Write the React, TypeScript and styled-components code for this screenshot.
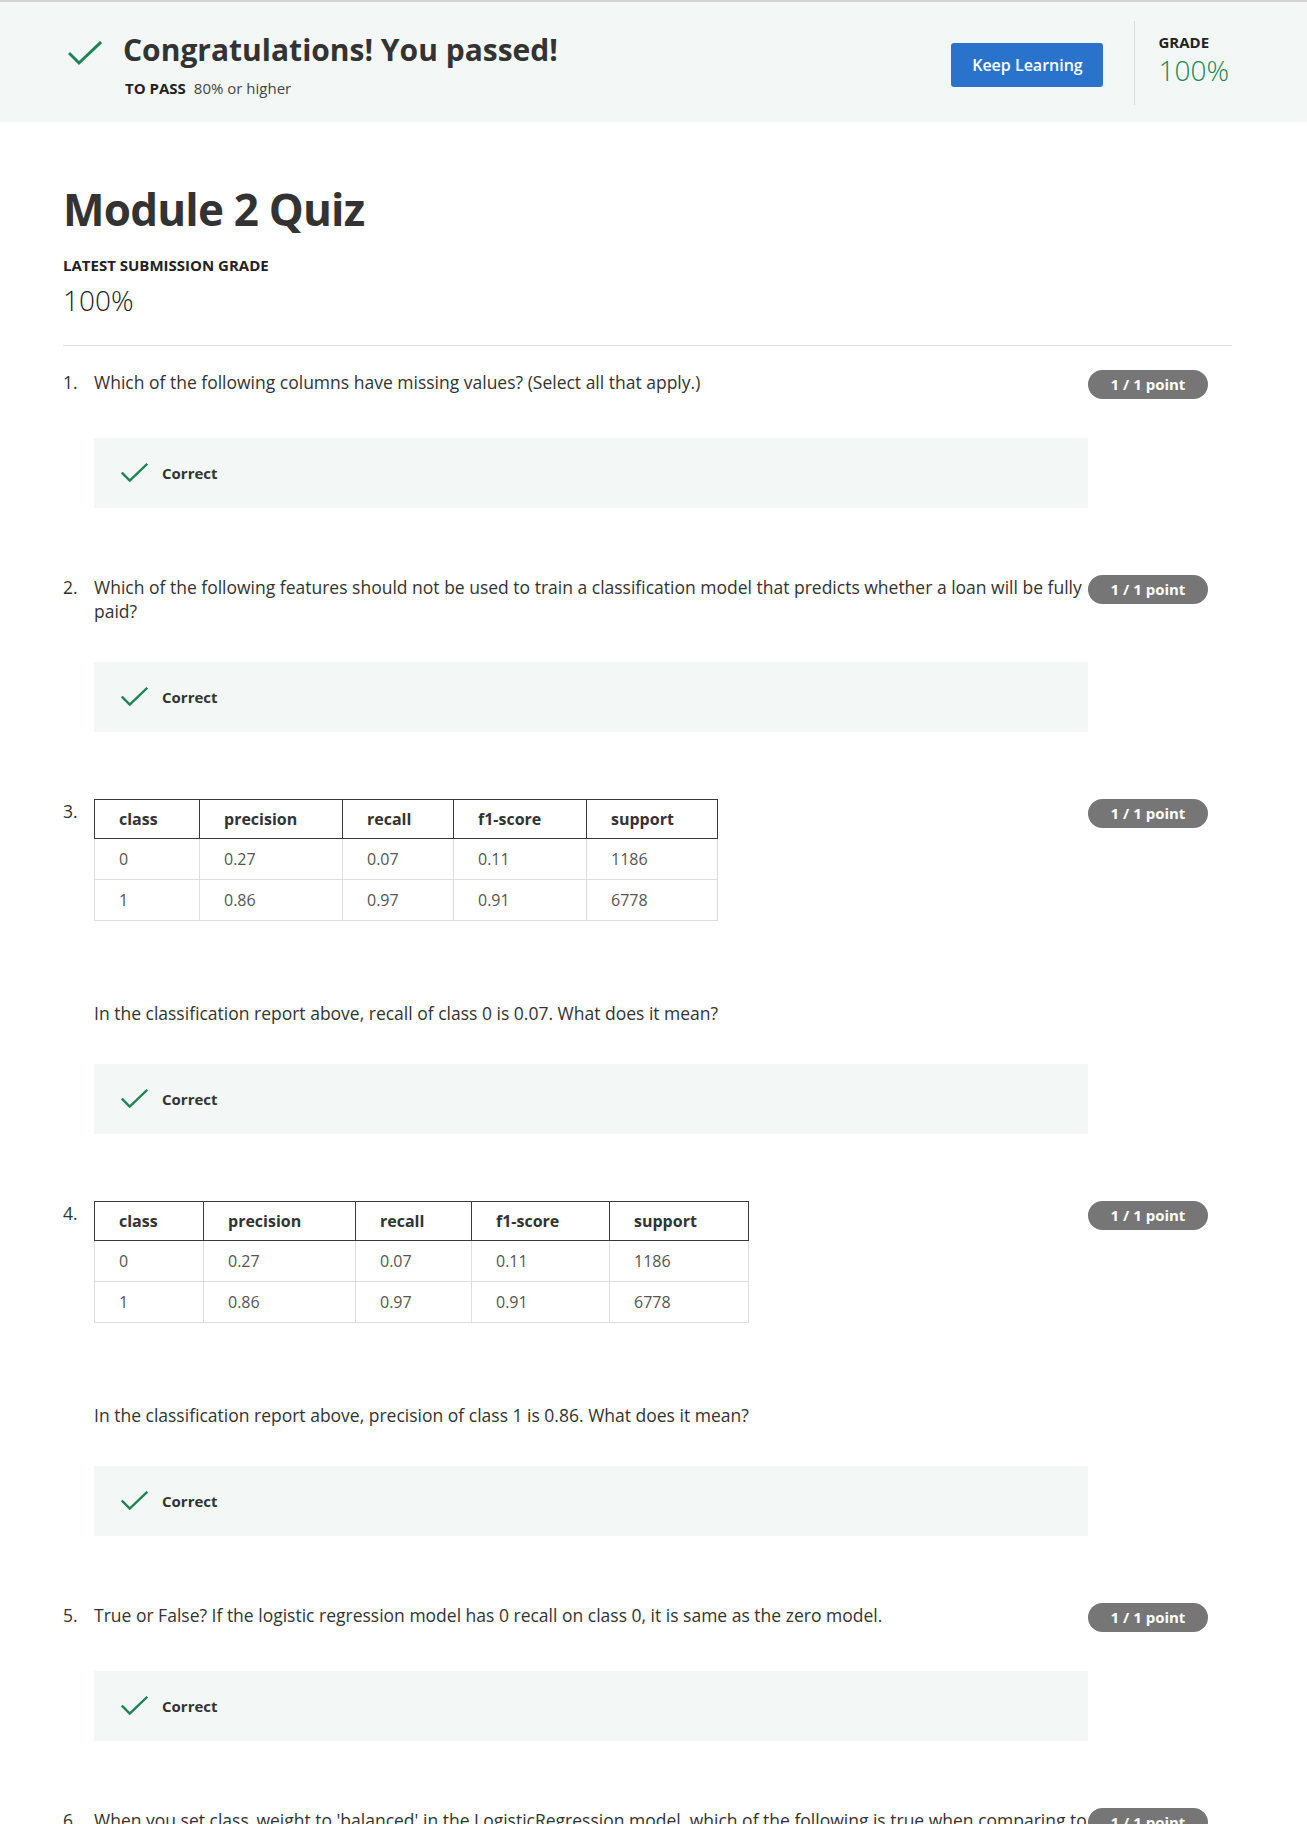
import React from "react";
import styled, { createGlobalStyle } from "styled-components";

const GlobalStyle = createGlobalStyle`
  html, body { margin: 0; padding: 0; background: #ffffff; }
  body {
    font-family: "Open Sans", "Noto Sans", "Liberation Sans", sans-serif;
    color: #333333;
    -webkit-font-smoothing: antialiased;
  }
  * { box-sizing: border-box; }
`;

const GREEN = "#1f8354";
const MINT = "#f3f8f6";

/* ---------- Banner ---------- */
const Banner = styled.header`
  background: ${MINT};
  border-top: 2px solid #d4d4d4;
  height: 122px;
  padding: 19px 78px 17px 63px;
  display: flex;
  align-items: stretch;
`;

const PassInfo = styled.div`
  flex: 1;
  display: flex;
  align-items: flex-start;
  gap: 21px;
`;

const BannerCheck = styled.svg`
  width: 34px;
  height: 25px;
  margin-top: 20px;
  margin-left: 5px;
  flex: none;
`;

const TitleBlock = styled.div`
  margin-top: 9px;
`;

const Title = styled.h1`
  margin: 0;
  font-size: 30px;
  line-height: 40px;
  font-weight: 700;
  color: #333;
`;

const PassReq = styled.div`
  margin-top: 8px;
  font-size: 15px;
  line-height: 20px;
  color: #444;
  padding-left: 2px;
  strong {
    font-weight: 700;
    color: #222;
    margin-right: 8px;
  }
`;

const Actions = styled.div`
  display: flex;
  align-items: stretch;
`;

const PrimaryButton = styled.button`
  align-self: flex-start;
  margin-top: 22px;
  width: 152px;
  height: 44px;
  border: none;
  border-radius: 3px;
  background: #2a73cc;
  color: #ffffff;
  font-family: inherit;
  font-size: 16px;
  font-weight: 600;
  cursor: pointer;
`;

const Divider = styled.div`
  width: 1px;
  background: #dcdcdc;
  margin-left: 31px;
`;

const GradeBox = styled.div`
  padding-left: 23px;
  padding-top: 11px;
`;

const GradeLabel = styled.div`
  font-size: 15px;
  line-height: 20px;
  font-weight: 700;
  color: #222;
`;

const GradeValue = styled.div`
  font-size: 28px;
  line-height: 36px;
  font-weight: 300;
  color: ${GREEN};
`;

/* ---------- Main ---------- */
const Page = styled.main`
  padding: 58px 75px 0 63px;
`;

const QuizTitle = styled.h2`
  margin: 0;
  font-size: 44px;
  line-height: 58px;
  letter-spacing: -0.8px;
  font-weight: 700;
  color: #333;
`;

const SubLabel = styled.div`
  margin-top: 17px;
  font-size: 15px;
  line-height: 20px;
  font-weight: 700;
  color: #222;
`;

const SubGrade = styled.div`
  margin-top: 7px;
  font-size: 28px;
  line-height: 36px;
  font-weight: 300;
  color: #222;
`;

const Rule = styled.hr`
  margin: 27px 0 0;
  border: none;
  border-top: 1px solid #e1e1e1;
`;

const QuestionList = styled.ol`
  list-style: none;
  margin: 24px 0 0;
  padding: 0;
`;

const Question = styled.li`
  display: flex;
  flex-direction: column;
  margin-bottom: 67px;
`;

const QHead = styled.div`
  display: grid;
  grid-template-columns: 31px 1fr 120px;
  align-items: start;
  padding-right: 24px;
`;

const QNum = styled.div`
  font-size: 17.5px;
  line-height: 24px;
  color: #333;
`;

const Stem = styled.div`
  min-width: 0;
`;

const Prompt = styled.p<{ $gapTop?: number }>`
  margin: ${(p) => p.$gapTop ?? 0}px 0 0;
  font-size: 17.5px;
  line-height: 24px;
  color: #333;
`;

const Badge = styled.div`
  width: 120px;
  height: 29px;
  border-radius: 15px;
  background: #767676;
  color: #ffffff;
  font-size: 15px;
  font-weight: 700;
  line-height: 29px;
  text-align: center;
  white-space: nowrap;
`;

const Feedback = styled.div`
  margin: 39px 144px 0 31px;
  height: 70px;
  background: ${MINT};
  display: flex;
  align-items: center;
  gap: 14px;
  padding-left: 27px;
`;

const SmallCheck = styled.svg`
  width: 27px;
  height: 20px;
  flex: none;
`;

const FeedbackText = styled.span`
  font-size: 15px;
  font-weight: 700;
  color: #333;
`;

const DataTable = styled.table`
  border-collapse: collapse;
  table-layout: fixed;
  font-size: 16px;
`;

const Th = styled.th`
  height: 39px;
  padding: 0 0 0 24px;
  text-align: left;
  font-weight: 700;
  color: #333;
  border: 1px solid #3a3a3a;
`;

const Td = styled.td`
  height: 41px;
  padding: 0 0 0 24px;
  text-align: left;
  font-weight: 400;
  color: #555;
  border: 1px solid #dedede;
`;

/* ---------- Pieces ---------- */
const CheckPath = () => (
  <polyline
    points="2,13 11,22 32,2"
    fill="none"
    stroke={GREEN}
    strokeWidth="3"
    strokeLinecap="square"
    strokeLinejoin="miter"
  />
);

const Correct = () => (
  <Feedback>
    <SmallCheck viewBox="0 0 34 25" aria-hidden="true">
      <CheckPath />
    </SmallCheck>
    <FeedbackText>Correct</FeedbackText>
  </Feedback>
);

const headers = ["class", "precision", "recall", "f1-score", "support"];
const rows = [
  ["0", "0.27", "0.07", "0.11", "1186"],
  ["1", "0.86", "0.97", "0.91", "6778"],
];

const Report = ({ widths }: { widths: number[] }) => (
  <DataTable style={{ width: widths.reduce((a, b) => a + b, 0) }}>
    <colgroup>
      {widths.map((w, i) => (
        <col key={i} style={{ width: w }} />
      ))}
    </colgroup>
    <thead>
      <tr>
        {headers.map((h) => (
          <Th key={h}>{h}</Th>
        ))}
      </tr>
    </thead>
    <tbody>
      {rows.map((r, i) => (
        <tr key={i}>
          {r.map((c, j) => (
            <Td key={j}>{c}</Td>
          ))}
        </tr>
      ))}
    </tbody>
  </DataTable>
);

type QProps = { n: number; children: React.ReactNode };

const QuizQuestion = ({ n, children }: QProps) => (
  <Question>
    <QHead>
      <QNum>{n}.</QNum>
      <Stem>{children}</Stem>
      <Badge>1 / 1 point</Badge>
    </QHead>
    <Correct />
  </Question>
);

export default function App() {
  return (
    <>
      <GlobalStyle />
      <Banner>
        <PassInfo>
          <BannerCheck viewBox="0 0 34 25" aria-hidden="true">
            <CheckPath />
          </BannerCheck>
          <TitleBlock>
            <Title>Congratulations! You passed!</Title>
            <PassReq>
              <strong>TO PASS</strong>80% or higher
            </PassReq>
          </TitleBlock>
        </PassInfo>
        <Actions>
          <PrimaryButton>Keep Learning</PrimaryButton>
          <Divider />
          <GradeBox>
            <GradeLabel>GRADE</GradeLabel>
            <GradeValue>100%</GradeValue>
          </GradeBox>
        </Actions>
      </Banner>

      <Page>
        <QuizTitle>Module 2 Quiz</QuizTitle>
        <SubLabel>LATEST SUBMISSION GRADE</SubLabel>
        <SubGrade>100%</SubGrade>
        <Rule />

        <QuestionList>
          <QuizQuestion n={1}>
            <Prompt>Which of the following columns have missing values? (Select all that apply.)</Prompt>
          </QuizQuestion>

          <QuizQuestion n={2}>
            <Prompt>
              Which of the following features should not be used to train a classification model that predicts whether a loan will be fully paid?
            </Prompt>
          </QuizQuestion>

          <QuizQuestion n={3}>
            <Report widths={[105, 143, 111, 133, 131]} />
            <Prompt $gapTop={80}>
              In the classification report above, recall of class 0 is 0.07. What does it mean?
            </Prompt>
          </QuizQuestion>

          <QuizQuestion n={4}>
            <Report widths={[109, 152, 116, 138, 139]} />
            <Prompt $gapTop={80}>
              In the classification report above, precision of class 1 is 0.86. What does it mean?
            </Prompt>
          </QuizQuestion>

          <QuizQuestion n={5}>
            <Prompt>
              True or False? If the logistic regression model has 0 recall on class 0, it is same as the zero model.
            </Prompt>
          </QuizQuestion>

          <QuizQuestion n={6}>
            <Prompt>
              When you set class_weight to 'balanced' in the LogisticRegression model, which of the following is true when comparing to the model without it?
            </Prompt>
          </QuizQuestion>
        </QuestionList>
      </Page>
    </>
  );
}
